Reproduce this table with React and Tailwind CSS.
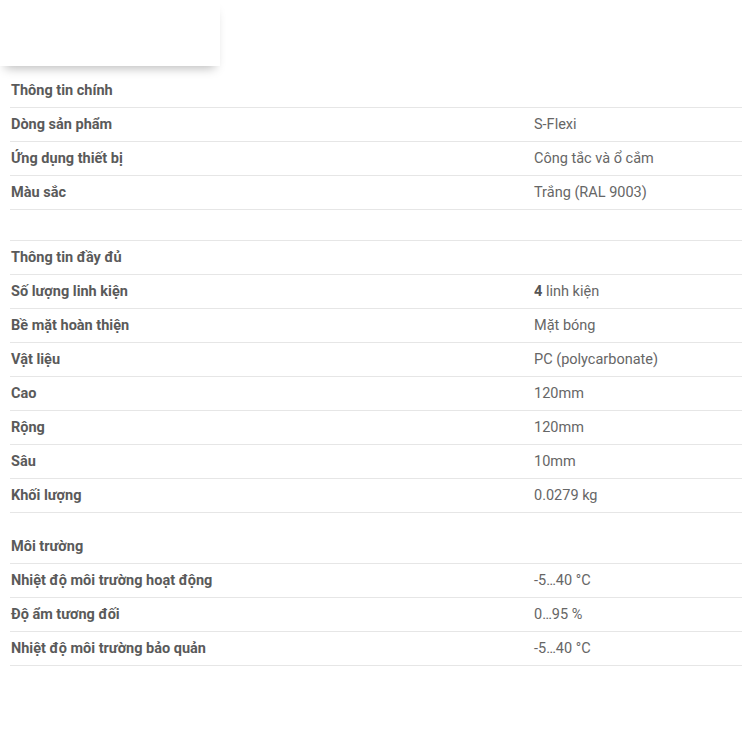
const sections = [
  {
    title: "Thông tin chính",
    gap: "mt-[8px]",
    topBorder: false,
    rows: [
      ["Dòng sản phẩm", "S-Flexi"],
      ["Ứng dụng thiết bị", "Công tắc và ổ cắm"],
      ["Màu sắc", "Trắng (RAL 9003)"],
    ],
  },
  {
    title: "Thông tin đầy đủ",
    gap: "mt-[30px]",
    topBorder: true,
    rows: [
      ["Số lượng linh kiện", <><span className="font-bold text-[#555]">4</span> linh kiện</>],
      ["Bề mặt hoàn thiện", "Mặt bóng"],
      ["Vật liệu", "PC (polycarbonate)"],
      ["Cao", "120mm"],
      ["Rộng", "120mm"],
      ["Sâu", "10mm"],
      ["Khối lượng", "0.0279 kg"],
    ],
  },
  {
    title: "Môi trường",
    gap: "mt-[17px]",
    topBorder: false,
    rows: [
      ["Nhiệt độ môi trường hoạt động", "-5…40 °C"],
      ["Độ ẩm tương đối", "0…95 %"],
      ["Nhiệt độ môi trường bảo quản", "-5…40 °C"],
    ],
  },
];

function Row({ label, value }) {
  return (
    <div className="flex items-center h-[34px] border-b border-[#e6e6e6]">
      <div className="w-[524px] pl-[1px] font-bold text-[#5a5a5a]">{label}</div>
      <div className="text-[#666]">{value}</div>
    </div>
  );
}

export default function App() {
  return (
    <div
      className="w-[742px] h-[742px] bg-white overflow-hidden text-[14.5px]"
      style={{ fontFamily: "Roboto, 'Noto Sans', sans-serif" }}
    >
      <div className="h-[66px] w-[220px] bg-white shadow-[0_7px_10px_-5px_rgba(0,0,0,0.28)]" />
      <div className="pl-[10px]">
        {sections.map((s) => (
          <div key={s.title} className={s.gap}>
            <div
              className={
                "flex items-center h-[34px] border-b border-[#e6e6e6] pl-[1px] font-bold text-[#5a5a5a]" +
                (s.topBorder ? " border-t h-[35px]" : "")
              }
            >
              {s.title}
            </div>
            {s.rows.map(([l, v]) => (
              <Row key={l} label={l} value={v} />
            ))}
          </div>
        ))}
      </div>
    </div>
  );
}
